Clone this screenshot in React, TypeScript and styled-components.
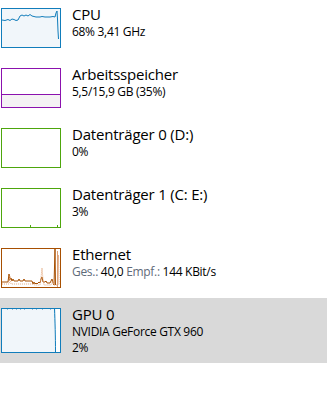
import React from 'react';
import styled, { createGlobalStyle } from 'styled-components';

const GlobalStyle = createGlobalStyle`
  html, body {
    margin: 0;
    padding: 0;
    background: #ffffff;
  }
  body {
    font-family: "Open Sans", "Noto Sans", sans-serif;
    color: #000000;
  }
`;

const List = styled.div`
  width: 327px;
  margin-top: -2px;
  display: flex;
  flex-direction: column;
`;

const Row = styled.div<{ $height: number; $selected?: boolean }>`
  height: ${(p) => p.$height}px;
  box-sizing: border-box;
  display: flex;
  align-items: flex-start;
  gap: 11px;
  padding: 6px 0 0 1px;
  background: ${(p) => (p.$selected ? '#d9d9d9' : 'transparent')};
`;

const Graph = styled.div<{ $border: string; $bg: string; $height: number }>`
  flex: none;
  width: 60px;
  height: ${(p) => p.$height}px;
  margin-top: 4px;
  box-sizing: border-box;
  border: 1px solid ${(p) => p.$border};
  background: ${(p) => p.$bg};

  svg {
    display: block;
    width: 58px;
    height: ${(p) => p.$height - 2}px;
  }
`;

const Info = styled.div`
  display: flex;
  flex-direction: column;
  white-space: nowrap;
`;

const Title = styled.div`
  font-size: 15px;
  line-height: 20px;
  letter-spacing: -0.2px;
`;

const Detail = styled.div`
  font-size: 12px;
  line-height: 16px;
  letter-spacing: -0.3px;
`;

const Label = styled.span`
  color: #5f6b7a;
`;

const CpuGraph = () => (
  <svg viewBox="0 0 58 38">
    <polyline
      points="0,11 3,11.5 6,10.5 8,11.5 10,10 12,10.5 14,11.5 16,11 18,7 20,6 22,7 24,6 26,7 28,5.5 30,7 32,7.5 34,8 38,8 40,7.5 43,8 48,8 51,7.5 53,8 54,4 55,2 55.5,10 56,22 56.5,30"
      fill="none"
      stroke="#117dbb"
      strokeWidth="1"
    />
  </svg>
);

const MemoryGraph = () => (
  <svg viewBox="0 0 58 38">
    <rect x="0" y="26" width="58" height="12" fill="#f4f2f4" />
    <line x1="0" y1="25.5" x2="58" y2="25.5" stroke="#8b12ae" strokeWidth="1" />
  </svg>
);

const DiskGraph = ({ ticks }: { ticks: number[] }) => (
  <svg viewBox="0 0 58 38">
    {ticks.map((x) => (
      <rect key={x} x={x} y="36" width="1" height="2" fill="#4da60c" />
    ))}
  </svg>
);

const EthernetGraph = () => (
  <svg viewBox="0 0 58 38">
    <polyline
      points="0,33 6,33 7,25 8,31 9,29 10,32 11,30 12,32 16,32 17,30 18,32 21,32 22,30 23,32 30,32 31,35 32,33 33,35 34,34 35,35 37,33 38,34 39,30 40,28 41,33 43,33 44,32 45,34 48,34 50,30 51,34 52,36 53,0 53.5,36"
      fill="none"
      stroke="#a74f01"
      strokeWidth="1"
    />
    <polyline
      points="0,35 7,35 8,27 9,35 30,35 33,36 38,36 39,29 40,19 41,30 42,36 49,36 51,32 52,36 56,36 56.5,6 57,36"
      fill="none"
      stroke="#e3a67a"
      strokeWidth="1"
      strokeDasharray="1 1"
    />
    <line x1="55.5" y1="2" x2="55.5" y2="38" stroke="#d9a07a" strokeWidth="1" />
  </svg>
);

const GpuGraph = () => (
  <svg viewBox="0 0 58 43">
    <rect x="54" y="0" width="4" height="43" fill="#ffffff" />
    {[5, 10, 14, 18, 22, 30, 34, 40, 48, 52].map((x) => (
      <rect key={x} x={x} y="0" width="1" height="1" fill="#8fbcdc" />
    ))}
    <path d="M52.5,0 C53,12 53.5,28 53.5,43" fill="none" stroke="#117dbb" strokeWidth="1" />
  </svg>
);

export default function App() {
  return (
    <>
      <GlobalStyle />
      <List>
        <Row $height={60}>
          <Graph $border="#117dbb" $bg="#f1f6fa" $height={40}>
            <CpuGraph />
          </Graph>
          <Info>
            <Title>CPU</Title>
            <Detail>68% 3,41 GHz</Detail>
          </Info>
        </Row>
        <Row $height={60}>
          <Graph $border="#8b12ae" $bg="#ffffff" $height={40}>
            <MemoryGraph />
          </Graph>
          <Info>
            <Title>Arbeitsspeicher</Title>
            <Detail>5,5/15,9 GB (35%)</Detail>
          </Info>
        </Row>
        <Row $height={60}>
          <Graph $border="#4da60c" $bg="#ffffff" $height={40}>
            <DiskGraph ticks={[]} />
          </Graph>
          <Info>
            <Title>Datenträger 0 (D:)</Title>
            <Detail>0%</Detail>
          </Info>
        </Row>
        <Row $height={60}>
          <Graph $border="#4da60c" $bg="#ffffff" $height={40}>
            <DiskGraph ticks={[28, 55]} />
          </Graph>
          <Info>
            <Title>Datenträger 1 (C: E:)</Title>
            <Detail>3%</Detail>
          </Info>
        </Row>
        <Row $height={60}>
          <Graph $border="#a74f01" $bg="#ffffff" $height={40}>
            <EthernetGraph />
          </Graph>
          <Info>
            <Title>Ethernet</Title>
            <Detail>
              <Label>Ges.:</Label> 40,0 <Label>Empf.:</Label> 144 KBit/s
            </Detail>
          </Info>
        </Row>
        <Row $height={65} $selected>
          <Graph $border="#117dbb" $bg="#f1f6fa" $height={45}>
            <GpuGraph />
          </Graph>
          <Info>
            <Title>GPU 0</Title>
            <Detail>NVIDIA GeForce GTX 960</Detail>
            <Detail>2%</Detail>
          </Info>
        </Row>
      </List>
    </>
  );
}
